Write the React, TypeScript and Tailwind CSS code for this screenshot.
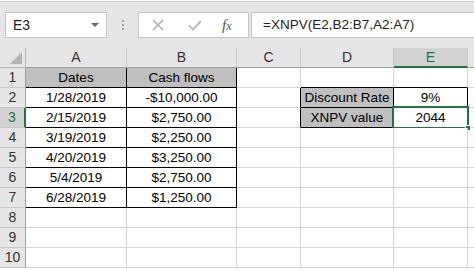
import React from "react";

const GRID = "border-[#d4d4d4]";
const cols = ["A", "B", "C", "D", "E"];
const widths = ["w-[101px]", "w-[110px]", "w-[64px]", "w-[93px]", "w-[74px]"];

type Cell = { text?: string; fill?: boolean; r?: boolean; b?: boolean };

const data: Record<number, Record<number, Cell>> = {
  1: { 0: { text: "Dates", fill: true, r: true, b: true }, 1: { text: "Cash flows", fill: true, r: true, b: true }, 3: { b: true }, 4: { b: true } },
  2: { 0: { text: "1/28/2019", r: true, b: true }, 1: { text: "-$10,000.00", r: true, b: true }, 2: { r: true }, 3: { text: "Discount Rate", fill: true, r: true, b: true }, 4: { text: "9%", r: true, b: true } },
  3: { 0: { text: "2/15/2019", r: true, b: true }, 1: { text: "$2,750.00", r: true, b: true }, 2: { r: true }, 3: { text: "XNPV value", fill: true, r: true, b: true }, 4: { text: "2044", r: true, b: true } },
  4: { 0: { text: "3/19/2019", r: true, b: true }, 1: { text: "$2,250.00", r: true, b: true } },
  5: { 0: { text: "4/20/2019", r: true, b: true }, 1: { text: "$3,250.00", r: true, b: true } },
  6: { 0: { text: "5/4/2019", r: true, b: true }, 1: { text: "$2,750.00", r: true, b: true } },
  7: { 0: { text: "6/28/2019", r: true, b: true }, 1: { text: "$1,250.00", r: true, b: true } },
};

export default function App() {
  return (
    <div className="w-[474px] h-[270px] overflow-hidden bg-white text-[#000]" style={{ fontFamily: '"Liberation Sans", Arial, sans-serif' }}>
      {/* top bar */}
      <div className="h-[47px] bg-[#e6e6e6] border-t border-[#d0d0d0] mt-px flex items-start pt-[10px]">
        <div className="ml-[5px] w-[102px] h-[26px] bg-white border border-[#c6c6c6] flex items-center justify-between px-[7px]">
          <span className="text-[14px] text-[#222]">E3</span>
          <svg width="8" height="5" viewBox="0 0 8 5"><path d="M0 0H8L4 4Z" fill="#666" /></svg>
        </div>
        <div className="w-[31px] h-[26px] flex flex-col items-center justify-center gap-[2px]">
          <div className="w-[2px] h-[2px] bg-[#a0a0a0]" />
          <div className="w-[2px] h-[2px] bg-[#a0a0a0]" />
          <div className="w-[2px] h-[2px] bg-[#a0a0a0]" />
        </div>
        <div className="w-[111px] h-[26px] bg-white border border-[#c6c6c6] flex items-center">
          <svg className="ml-[13px]" width="12" height="12" viewBox="0 0 12 12"><path d="M1 1L11 11M11 1L1 11" stroke="#b0b0b0" strokeWidth="1.6" /></svg>
          <svg className="ml-[24px]" width="14" height="11" viewBox="0 0 14 11"><path d="M1 5.5L5 9.5L13 1" stroke="#bcbcbc" strokeWidth="2" fill="none" /></svg>
          <span className="ml-[20px] text-[15px] italic text-[#555]" style={{ fontFamily: '"Liberation Serif", serif' }}>f<span className="text-[12px]">x</span></span>
        </div>
        <div className="ml-[2px] flex-1 h-[26px] bg-white border border-[#c6c6c6] border-r-0 flex items-center pl-[11px]">
          <span className="text-[13.5px] text-[#222]">=XNPV(E2,B2:B7,A2:A7)</span>
        </div>
      </div>

      {/* header row */}
      <div className="flex h-[20px] bg-[#e6e6e6] text-[14px] text-[#333]">
        <div className="w-[26px] shrink-0 border-r border-b border-[#b8b8b8] relative">
          <svg className="absolute right-[3px] bottom-[3px]" width="12" height="12" viewBox="0 0 12 12"><path d="M12 0V12H0Z" fill="#b4b4b4" /></svg>
        </div>
        {cols.map((c, i) => (
          <div
            key={c}
            className={`${widths[i]} shrink-0 border-r border-[#c8c8c8] flex items-center justify-center ${c === "E" ? "bg-[#d2d2d2] text-[#217346] border-b-2 border-b-[#217346]" : "border-b border-b-[#9e9e9e]"}`}
          >
            {c}
          </div>
        ))}
        <div className="flex-1 border-b border-[#9e9e9e]" />
      </div>

      {/* rows */}
      {Array.from({ length: 10 }, (_, k) => k + 1).map((r) => (
        <div key={r} className="flex h-[20px] text-[13.5px]">
          <div
            className={`w-[26px] shrink-0 border-b border-[#c8c8c8] flex items-center justify-center text-[14px] ${r === 3 ? "bg-[#d2d2d2] text-[#217346] border-r-2 border-r-[#217346]" : "bg-[#e6e6e6] text-[#333] border-r border-r-[#9e9e9e]"}`}
          >
            {r}
          </div>
          {cols.map((c, i) => {
            const cell = data[r]?.[i] ?? {};
            const sel = r === 3 && c === "E";
            return (
              <div
                key={c}
                className={`${widths[i]} shrink-0 relative border-r border-b flex items-center justify-center ${cell.fill ? "bg-[#bfbfbf]" : "bg-white"} ${cell.r ? "border-r-black" : "border-r-[#d4d4d4]"} ${cell.b ? "border-b-black" : "border-b-[#d4d4d4]"}`}
              >
                <span className="leading-none">{cell.text}</span>
                {sel && (
                  <>
                    <div className="absolute left-[-2px] top-[-2px] right-[-2px] bottom-[-2px] border-2 border-[#217346]" />
                    <div className="absolute right-[-4px] bottom-[-4px] w-[6px] h-[6px] bg-[#217346] border border-white" />
                  </>
                )}
              </div>
            );
          })}
          <div className={`flex-1 border-b ${GRID}`} />
        </div>
      ))}
    </div>
  );
}
